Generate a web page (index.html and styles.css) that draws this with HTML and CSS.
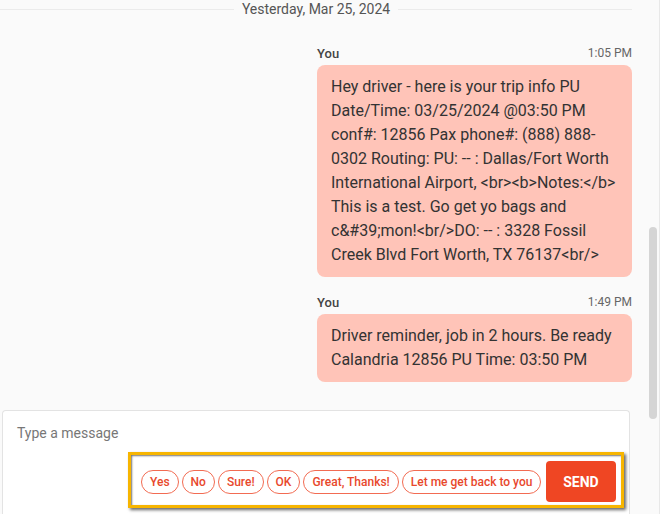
FILE: index.html
```html
<!DOCTYPE html>
<html lang="en">
    <head>
        <meta charset="UTF-8" />
        <meta name="viewport" content="width=device-width, initial-scale=1.0" />
        <link rel="stylesheet" href="styles.css">
        <title>Chat</title>
    </head>
    <body>
        <div class="page">
            <div class="chat">
                <div class="divider">
                    <span class="divider__line"></span>
                    <span class="divider__text">Yesterday, Mar 25, 2024</span>
                    <span class="divider__line"></span>
                </div>

                <div class="msg">
                    <div class="msg__meta">
                        <span class="msg__author">You</span>
                        <span class="msg__time">1:05 PM</span>
                    </div>
                    <div class="msg__bubble">Hey driver - here is your trip info PU Date/Time: 03/25/2024 @03:50 PM conf#: 12856 Pax phone#: (888) 888-0302 Routing: PU: -- : Dallas/Fort Worth International Airport, &lt;br&gt;&lt;b&gt;Notes:&lt;/b&gt; This is a test. Go get yo bags and c&amp;#39;mon!&lt;br/&gt;DO: -- : 3328 Fossil Creek Blvd Fort Worth, TX 76137&lt;br/&gt;</div>
                </div>

                <div class="msg">
                    <div class="msg__meta">
                        <span class="msg__author">You</span>
                        <span class="msg__time">1:49 PM</span>
                    </div>
                    <div class="msg__bubble">Driver reminder, job in 2 hours. Be ready Calandria 12856 PU Time: 03:50 PM</div>
                </div>

                <div class="composer">
                    <div class="composer__input">Type a message</div>
                    <div class="composer__actions">
                        <div class="chips">
                            <button class="chip">Yes</button>
                            <button class="chip">No</button>
                            <button class="chip">Sure!</button>
                            <button class="chip">OK</button>
                            <button class="chip">Great, Thanks!</button>
                            <button class="chip">Let me get back to you</button>
                        </div>
                        <button class="send">SEND</button>
                    </div>
                </div>
            </div>

            <div class="scroll">
                <div class="scroll__thumb"></div>
            </div>
        </div>
    </body>
</html>
```

FILE: styles.css
```css
*,
*::before,
*::after {
    box-sizing: border-box;
}

body {
    margin: 0;
    background: #fafafa;
    font-family: Roboto, 'Liberation Sans', sans-serif;
    color: #333;
    overflow: hidden;
}

.page {
    display: flex;
    height: 514px;
}

.chat {
    width: 632px;
    display: flex;
    flex-direction: column;
}

.divider {
    display: flex;
    align-items: center;
    height: 18px;
}

.divider__line {
    flex: 1;
    height: 1px;
    background: #ebebeb;
}

.divider__text {
    margin: 0 8px;
    font-size: 14px;
    color: #555;
}

.msg {
    width: 315px;
    margin-left: auto;
    margin-top: 27px;
}

.msg + .msg {
    margin-top: 17px;
}

.msg__meta {
    display: flex;
    justify-content: space-between;
    align-items: center;
    height: 16px;
}

.msg__author {
    font-size: 13px;
    font-weight: 500;
    color: #444;
}

.msg__time {
    font-size: 12px;
    color: #666;
}

.msg__bubble {
    margin-top: 4px;
    padding: 10px 15px 10px 14px;
    background: #ffc4b8;
    border-radius: 8px;
    font-size: 16px;
    line-height: 24px;
    color: #333;
}

.composer {
    margin: 28px 2px 0 2px;
    flex: 1;
    background: #fff;
    border: 1px solid #e3e3e3;
    border-bottom: none;
    border-radius: 4px 4px 0 0;
    padding: 13px 5px 0 14px;
}

.composer__input {
    font-size: 14px;
    line-height: 18px;
    color: #777;
}

.composer__actions {
    display: flex;
    align-items: center;
    width: 496px;
    margin: 10px 0 0 auto;
    padding: 6px 5px 3px 10px;
    border: 3px solid #f7b500;
    box-shadow: 2px 2px 3px rgba(0, 0, 0, 0.6), inset 1px 1px 2px rgba(0, 0, 0, 0.55);
}

.chips {
    display: flex;
    gap: 3px;
}

.chip {
    height: 24px;
    padding: 0 8px;
    border: 1.5px solid #f26b52;
    border-radius: 12px;
    background: #fff;
    font-family: Roboto, 'Liberation Sans', sans-serif;
    font-size: 12px;
    font-weight: 500;
    color: #e8482c;
}

.send {
    margin-left: auto;
    width: 70px;
    height: 41px;
    border: none;
    border-radius: 4px;
    background: #ef4623;
    color: #fff;
    font-family: Roboto, 'Liberation Sans', sans-serif;
    font-size: 14px;
    font-weight: 700;
}

.scroll {
    flex: 1;
    padding: 227px 0 0 17px;
    border-right: 1px solid #e8e8e8;
}

.scroll__thumb {
    width: 8px;
    height: 192px;
    border-radius: 4px;
    background: #d5d5d5;
}
```
